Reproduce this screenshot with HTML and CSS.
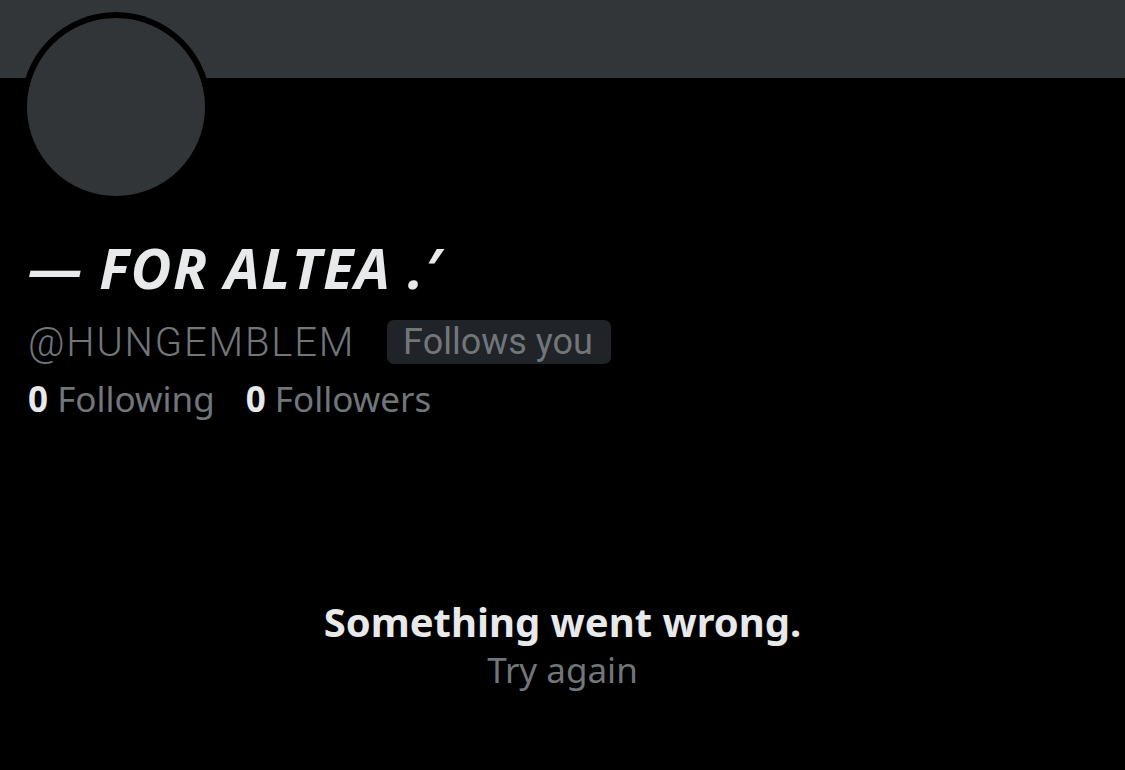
FILE: index.html
```html
<!DOCTYPE html>
<html>
<head>
<meta charset="utf-8">
<link rel="stylesheet" href="styles.css">
</head>
<body>
<div class="banner"></div>
<div class="profile">
  <div class="avatar"></div>
  <h1 class="name">— FOR ALTEA .′</h1>
  <div class="handle-row">
    <span class="handle">@HUNGEMBLEM</span>
    <span class="badge">Follows you</span>
  </div>
  <div class="stats">
    <span class="stat"><b>0</b> Following</span>
    <span class="stat"><b>0</b> Followers</span>
  </div>
</div>
<div class="error">
  <div class="error-title">Something went wrong.</div>
  <div class="error-retry">Try again</div>
</div>
</body>
</html>
```
FILE: styles.css
```css
html, body {
  margin: 0;
  padding: 0;
  background: #000;
  width: 1125px;
  height: 770px;
  overflow: hidden;
}
body {
  font-family: "Noto Sans", "Open Sans", sans-serif;
  color: #e7e9ea;
}
.banner {
  height: 78px;
  background: #333639;
}
.profile {
  padding-left: 21px;
}
.avatar {
  width: 178px;
  height: 178px;
  border-radius: 50%;
  background: #323538;
  border: 6px solid #000;
  margin-top: -66px;
}
.name {
  margin: 35px 0 0 7px;
  font-family: "Open Sans", sans-serif;
  font-style: italic;
  font-weight: 700;
  font-size: 56px;
  line-height: 60px;
  letter-spacing: 1.5px;
  color: #e7e9ea;
}
.handle-row {
  display: flex;
  align-items: center;
  gap: 32px;
  margin: 23px 0 0 7px;
  height: 44px;
}
.handle {
  font-family: "Roboto", sans-serif;
  font-weight: 300;
  font-size: 40px;
  letter-spacing: 1.8px;
  color: #71767b;
}
.badge {
  font-family: "Roboto", sans-serif;
  background: #202327;
  color: #71767b;
  border-radius: 7px;
  font-size: 36px;
  line-height: 44px;
  padding: 0 18px 0 16px;
}
.stats {
  display: flex;
  gap: 31px;
  margin: 11px 0 0 7px;
  font-size: 35px;
  line-height: 48px;
  color: #71767b;
}
.stat b {
  color: #e7e9ea;
  font-weight: 700;
}
.error {
  text-align: center;
  margin-top: 175px;
}
.error-title {
  font-weight: 700;
  font-size: 40px;
  line-height: 48px;
  color: #e7e9ea;
}
.error-retry {
  margin-top: 2px;
  font-size: 35px;
  line-height: 44px;
  color: #71767b;
}
```
